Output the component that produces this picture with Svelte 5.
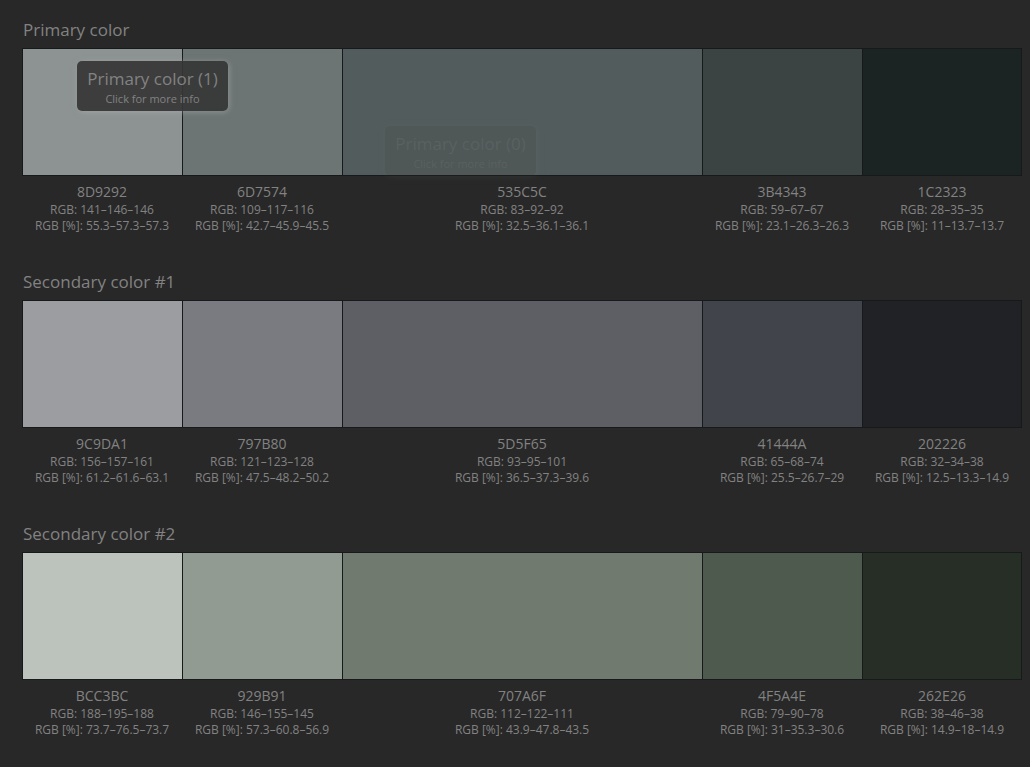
<script>
  const groups = [
    { name: 'Primary color', colors: [
      ['8D9292', '141–146–146', '55.3–57.3–57.3'],
      ['6D7574', '109–117–116', '42.7–45.9–45.5'],
      ['535C5C', '83–92–92', '32.5–36.1–36.1'],
      ['3B4343', '59–67–67', '23.1–26.3–26.3'],
      ['1C2323', '28–35–35', '11–13.7–13.7']
    ] },
    { name: 'Secondary color #1', colors: [
      ['9C9DA1', '156–157–161', '61.2–61.6–63.1'],
      ['797B80', '121–123–128', '47.5–48.2–50.2'],
      ['5D5F65', '93–95–101', '36.5–37.3–39.6'],
      ['41444A', '65–68–74', '25.5–26.7–29'],
      ['202226', '32–34–38', '12.5–13.3–14.9']
    ] },
    { name: 'Secondary color #2', colors: [
      ['BCC3BC', '188–195–188', '73.7–76.5–73.7'],
      ['929B91', '146–155–145', '57.3–60.8–56.9'],
      ['707A6F', '112–122–111', '43.9–47.8–43.5'],
      ['4F5A4E', '79–90–78', '31–35.3–30.6'],
      ['262E26', '38–46–38', '14.9–18–14.9']
    ] }
  ];
</script>

<main>
  {#each groups as group, g}
    <section>
      <h2>{group.name}</h2>
      <div class="strip">
        {#each group.colors as [hex], i}
          <button class="swatch" aria-labelledby="color-{g}-{i}" style="background-color: #{hex}"></button>
        {/each}
        {#if g === 0}
          <div class="tip active"><strong>Primary color (1)</strong><span>Click for more info</span></div>
          <div class="tip fading"><strong>Primary color (0)</strong><span>Click for more info</span></div>
        {/if}
      </div>
      <div class="labels">
        {#each group.colors as [hex, rgb, percent], i}
          <div class="label">
            <h3 id="color-{g}-{i}">{hex}</h3>
            <p>RGB: {rgb}</p>
            <p>RGB [%]: {percent}</p>
          </div>
        {/each}
      </div>
    </section>
  {/each}
</main>

<style>
  :global(body) {
    margin: 0;
    background: #282828;
  }
  main {
    padding: 18px 8px 0 22px;
    color: #828282;
    font-family: "Segoe UI", "Open Sans", "Noto Sans", sans-serif;
  }
  section {
    padding-bottom: 36px;
  }
  h2, h3, p {
    margin: 0;
    font-weight: 400;
  }
  h2 {
    padding: 0 1px 6px;
    font-size: 17px;
    line-height: 24px;
  }
  .strip, .labels {
    display: grid;
    grid-template-columns: 4fr 4fr 9fr 4fr 4fr;
  }
  .strip {
    position: relative;
    height: 128px;
  }
  .swatch {
    min-width: 0;
    margin: 0;
    padding: 0;
    border: 1px solid #171a1a;
    border-right-width: 0;
    border-radius: 0;
    cursor: pointer;
  }
  .swatch:nth-child(5) {
    border-right-width: 1px;
  }
  .labels {
    padding-top: 6px;
    text-align: center;
    white-space: nowrap;
  }
  h3 {
    font-size: 14px;
    line-height: 20px;
  }
  p {
    font-size: 12px;
    line-height: 16px;
  }
  .tip {
    position: absolute;
    box-sizing: border-box;
    width: 151px;
    padding: 7px 0 3px;
    border-radius: 5px;
    background: #373737;
    box-shadow: 1px 1px 6px rgba(180, 185, 185, 0.5);
    text-align: center;
    white-space: nowrap;
    pointer-events: none;
  }
  .tip strong, .tip span {
    display: block;
    font-weight: 400;
  }
  .tip strong {
    font-size: 17px;
    line-height: 22px;
  }
  .tip span {
    font-size: 11px;
    line-height: 18px;
  }
  .active {
    left: 55px;
    top: 13px;
    opacity: 0.93;
  }
  .fading {
    left: 363px;
    top: 78px;
    opacity: 0.13;
  }
</style>
